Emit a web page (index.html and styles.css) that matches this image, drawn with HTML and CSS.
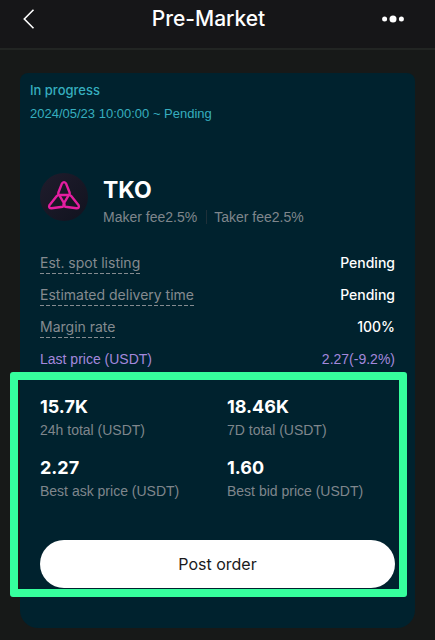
FILE: index.html
```html
<!doctype html>
<html lang="en">
<head>
	<meta charset="UTF-8">
	<meta name="viewport" content="width=device-width, initial-scale=1">
	<title>Pre-Market</title>
	<link rel="stylesheet" href="styles.css">
</head>
<body>
	<header class="header">
		<button type="button" class="back" aria-label="Back">
			<svg width="12" height="20" viewBox="0 0 12 20"><path d="M10.500 .8L1.300 10l9.200 9.200" fill="none" stroke="#fff" stroke-width="1.6"/></svg>
		</button>
		<h1>Pre-Market</h1>
		<button type="button" class="more" aria-label="More">
			<svg width="22" height="8" viewBox="0 0 22 8" fill="#fff"><circle cx="2.6" cy="4" r="2.5"/><circle cx="11" cy="4" r="3.5"/><circle cx="19.400" cy="4" r="2.5"/></svg>
		</button>
	</header>

	<main class="card">
		<div class="status">
			<div class="state">In progress</div>
			<div class="date">2024/05/23 10:00:00 ~ Pending</div>
		</div>

		<div class="token">
			<svg class="logo" width="48" height="48" viewBox="0 0 48 48">
				<defs>
					<linearGradient id="disc" x1="0" y1="0" x2="1" y2="1">
						<stop offset="0" stop-color="#1f1c2c"/>
						<stop offset="1" stop-color="#11131f"/>
					</linearGradient>
				</defs>
				<circle cx="24" cy="24" r="24" fill="url(#disc)"/>
				<g fill="none" stroke="#e41ea0" stroke-width="2.400" stroke-linejoin="round">
					<path d="M22 10.400Q24 7.800 26 10.400L29.600 19.500Q30.200 22 28 22H20Q17.800 22 18.400 19.500Z"/>
					<path d="M17 22.800Q18.800 21.300 20 23.300L24.200 30.500Q25.300 32.900 22.800 33.700L11.500 35.300Q8.300 35.200 9.400 32.200Z"/>
					<path d="M31 22.800Q29.200 21.300 28 23.300L23.800 30.500Q22.700 32.900 25.200 33.700L36.500 35.300Q39.700 35.200 38.600 32.200Z"/>
				</g>
			</svg>
			<div>
				<h2>TKO</h2>
				<div class="fees">
					<span>Maker fee2.5%</span>
					<span class="taker">Taker fee2.5%</span>
				</div>
			</div>
		</div>

		<dl class="info">
			<div class="row"><dt><span class="hint">Est. spot listing</span></dt><dd>Pending</dd></div>
			<div class="row"><dt><span class="hint">Estimated delivery time</span></dt><dd>Pending</dd></div>
			<div class="row"><dt><span class="hint">Margin rate</span></dt><dd>100%</dd></div>
			<div class="row last"><dt>Last price (USDT)</dt><dd>2.27(-9.2%)</dd></div>
		</dl>

		<section class="trade">
			<div class="stats">
				<div><strong>15.7K</strong><span>24h total (USDT)</span></div>
				<div><strong>18.46K</strong><span>7D total (USDT)</span></div>
				<div><strong>2.27</strong><span>Best ask price (USDT)</span></div>
				<div><strong>1.60</strong><span>Best bid price (USDT)</span></div>
			</div>
			<button type="button" class="post">Post order</button>
			<div class="highlight"></div>
		</section>
	</main>
</body>
</html>
```

FILE: styles.css
```css
*{box-sizing: border-box;}
body{
	margin: 0;
	background-color: #171918;
	color: #fff;
	font: 14px/22px Inter, "Liberation Sans", sans-serif;
}
h1,h2,dl,dd{margin: 0;}
button{
	border: 0;
	padding: 0;
	background: none;
	font-family: inherit;
	cursor: pointer;
}
.header{
	display: flex;
	align-items: center;
	justify-content: space-between;
	height: 50px;
	padding: 0 31px 10px 23px;
	background-color: #161618;
	border-bottom: 2px solid #222523;
}
.header button{
	display: flex;
}
.header h1{
	font-size: 21px;
	line-height: 38px;
	font-weight: 500;
}
.card{
	margin: 23px 20px 12px;
	padding: 5px 20px 40px;
	border-radius: 8px 8px 18px 18px;
	background-color: #00222e;
}
.status{
	margin-left: -10px;
	color: #36aebf;
	font-size: 13px;
	line-height: 24px;
}
.state{font-weight: 500;}
.date,
.fees,
.stats span,
.row.last{
	font-family: "Liberation Sans", Arial, sans-serif;
}
.token{
	display: flex;
	gap: 15px;
	margin-top: 47px;
}
.token h2{
	font-size: 23px;
	line-height: 34px;
	font-weight: 700;
}
.fees{
	display: flex;
	align-items: center;
	color: #7f868c;
	line-height: 20px;
}
.taker{
	margin-left: 9px;
	padding-left: 8px;
	background: linear-gradient(#1f3039,#1f3039) left center / 1px 14px no-repeat;
}
.info{margin-top: 20px;}
.row{
	display: flex;
	justify-content: space-between;
	line-height: 32px;
}
.row dt{color: #858b90;}
.row dd{font-weight: 500;}
.hint{
	padding-bottom: 3px;
	background: repeating-linear-gradient(90deg,#858b90 0 4px,transparent 4px 6px) left bottom / 100% 1px no-repeat;
}
.row.last dt,
.row.last dd{
	color: #a488dd;
	font-weight: 400;
}
.trade{
	position: relative;
	padding-top: 20px;
}
.stats{
	display: grid;
	grid-template-columns: 187px 1fr;
	row-gap: 15px;
}
.stats strong{
	display: block;
	font-size: 18px;
	line-height: 24px;
}
.stats span{
	display: block;
	color: #7f868c;
}
.post{
	display: block;
	width: 100%;
	height: 48px;
	margin-top: 38px;
	border-radius: 24px;
	background-color: #fff;
	color: #1a1a1c;
	font-size: 16px;
}
/* frame round the stats and the button */
.highlight{
	position: absolute;
	top: -3px;
	right: -12px;
	bottom: -9px;
	left: -30px;
	border: 8px solid #36ff9d;
	border-radius: 3px;
	pointer-events: none;
}
```
